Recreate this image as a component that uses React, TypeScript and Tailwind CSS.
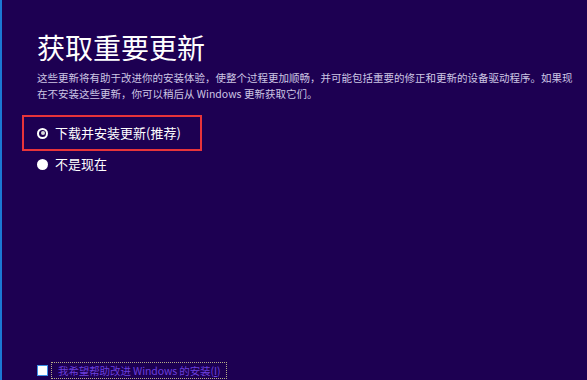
import React, { useState } from "react";

const cjk = "font-['Noto_Sans_CJK_SC','Noto_Sans',sans-serif]";

export default function App() {
  const [choice, setChoice] = useState<"install" | "later">("install");
  const [improve, setImprove] = useState(false);

  return (
    <div className={`flex h-[380px] w-[587px] overflow-hidden bg-[#1d0052] ${cjk}`}>
      {/* left accent edge */}
      <div className="w-[2px] shrink-0 bg-[#1b78d4]" />

      <div className="flex flex-1 flex-col pl-[35px]">
        <h1 className="mt-[30px] text-[28px] leading-[34px] font-normal text-white">
          获取重要更新
        </h1>

        <div className="mt-[6px] text-[10.5px] leading-[16px] text-[#cdc6e4]">
          <p className="whitespace-nowrap">
            这些更新将有助于改进你的安装体验，使整个过程更加顺畅，并可能包括重要的修正和更新的设备驱动程序。如果现
          </p>
          <p className="whitespace-nowrap">在不安装这些更新，你可以稍后从 Windows 更新获取它们。</p>
        </div>

        {/* options */}
        <div className="mt-[13px] flex flex-col">
          <div className="-ml-[15px] flex h-[36px] w-[180px] items-center border-2 border-[#e8343a] pl-[13px]">
            <button
              className="flex items-center gap-[7px] text-[13px] text-white"
              onClick={() => setChoice("install")}
            >
              <span className="flex h-[11px] w-[11px] items-center justify-center rounded-full bg-white">
                <span className="flex h-[7px] w-[7px] items-center justify-center rounded-full bg-[#1d0052]">
                  {choice === "install" && <span className="h-[4px] w-[4px] rounded-full bg-[#d8d8d8]" />}
                </span>
              </span>
              下载并安装更新(推荐)
            </button>
          </div>

          <button
            className="mt-[1px] flex h-[24px] items-center gap-[7px] text-[13px] text-white"
            onClick={() => setChoice("later")}
          >
            <span className="flex h-[11px] w-[11px] items-center justify-center rounded-full bg-white">
              {choice === "later" && <span className="h-[4px] w-[4px] rounded-full bg-[#1d0052]" />}
            </span>
            不是现在
          </button>
        </div>

        {/* bottom checkbox */}
        <div className="mt-auto mb-[1px] flex items-center gap-[2px]">
          <button
            className="h-[11px] w-[11px] shrink-0 border border-[#3b8ee6] bg-white"
            onClick={() => setImprove(!improve)}
          >
            {improve && <span className="block text-[9px] leading-[9px] text-[#1d0052]">✓</span>}
          </button>
          <span className="ml-[1px] flex h-[17px] items-center border border-dotted border-[#b7ae86] px-[6px] text-[10.5px] tracking-[-0.1px] whitespace-nowrap text-[#6b3fdc]">
            我希望帮助改进 Windows 的安装(<span className="underline">I</span>)
          </span>
        </div>
      </div>
    </div>
  );
}
